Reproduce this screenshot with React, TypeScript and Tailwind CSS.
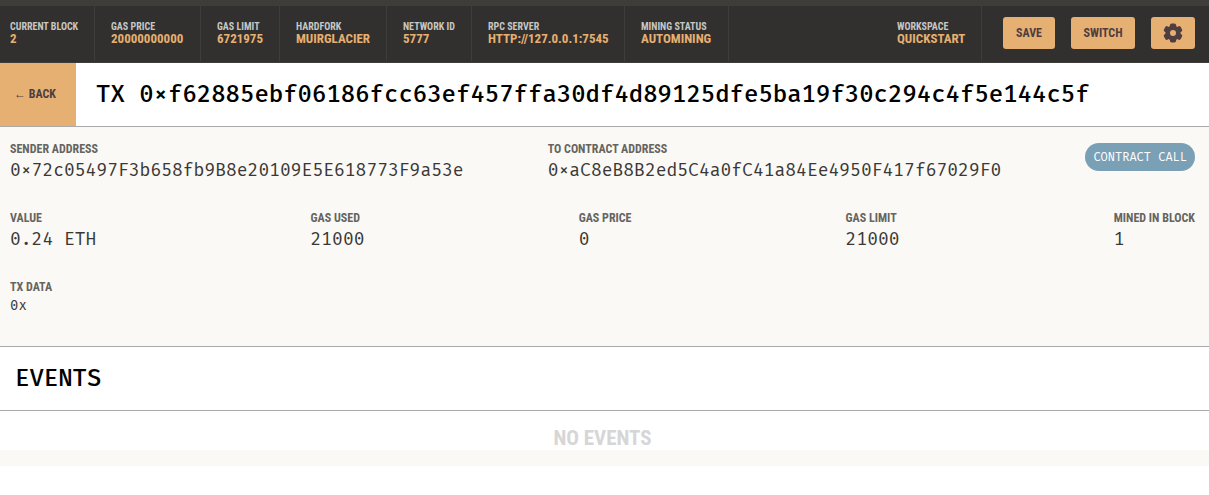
import type { ReactNode } from "react";

const condensed = "font-['Roboto_Condensed','Liberation_Sans_Narrow',Roboto,sans-serif]";
const mono = "font-['Fira_Mono','Noto_Sans_Mono','Liberation_Mono',monospace]";

const statuses = [
  { label: "Current Block", value: "2", box: "w-[95px] pl-2.5" },
  { label: "Gas Price", value: "20000000000", box: "w-[106px] pl-4" },
  { label: "Gas Limit", value: "6721975", box: "w-[79px] pl-4" },
  { label: "Hardfork", value: "MuirGlacier", box: "w-[107px] pl-4" },
  { label: "Network ID", value: "5777", box: "w-[85px] pl-4" },
  { label: "RPC Server", value: "http://127.0.0.1:7545", box: "w-[153px] pl-4" },
  { label: "Mining Status", value: "Automining", box: "w-[104px] pl-4" },
];

function Status({ label, value, box }: { label: string; value: string; box: string }) {
  return (
    <div
      className={`${box} shrink-0 border-r border-[#3f3d39] pt-[15px] font-bold whitespace-nowrap uppercase`}
    >
      <div className="text-[10px] leading-3 text-[#c8c7c4]">{label}</div>
      <div className="text-[13px] leading-3 text-[#e6b072]">{value}</div>
    </div>
  );
}

function Field({ label, children, small }: { label: string; children: ReactNode; small?: boolean }) {
  return (
    <div>
      <dt className="text-[12px] leading-4 font-bold whitespace-nowrap text-[#66645f] uppercase">{label}</dt>
      <dd className={`${mono} text-[#3a3834] ${small ? "text-[14px] leading-[22px]" : "text-[18px] leading-[26px]"}`}>
        {children}
      </dd>
    </div>
  );
}

const button =
  "flex h-8 items-center justify-center rounded-[3px] bg-[#e6b072] text-[12px] font-bold text-[#4e3d41] uppercase";

function Gear() {
  return (
    <svg viewBox="0 0 20 20" className="size-5" fill="currentColor" aria-hidden="true">
      <rect x="6.9" y="0.4" width="6.2" height="19.2" rx="1.8" />
      <rect x="6.9" y="0.4" width="6.2" height="19.2" rx="1.8" transform="rotate(60 10 10)" />
      <rect x="6.9" y="0.4" width="6.2" height="19.2" rx="1.8" transform="rotate(120 10 10)" />
      <circle cx="10" cy="10" r="7.6" />
      <circle cx="10" cy="10" r="3" className="fill-[#e6b072]" />
    </svg>
  );
}

export default function App() {
  return (
    <div className={`${condensed} bg-white`}>
      <header className="flex h-[63px] border-t-6 border-b border-[#3f3d39] bg-[#31302e] pr-3.5">
        <div className="flex pb-px">
          {statuses.map((s) => (
            <Status key={s.label} {...s} />
          ))}
        </div>
        <div className="ml-auto flex pb-px">
          <Status label="Workspace" value="Quickstart" box="w-[101px] pl-4" />
        </div>
        <div className="ml-[21px] flex gap-4 pt-[11px]">
          <button className={`${button} w-[52px]`}>Save</button>
          <button className={`${button} w-16`}>Switch</button>
          <button className={`${button} w-11`} aria-label="Settings">
            <Gear />
          </button>
        </div>
      </header>
      <main className="bg-[#faf9f5] pb-4">
        <div className="flex h-16 border-b border-[#aaa9a9] bg-white">
          <button className="w-[76px] bg-[#e6b072] pr-1.5 pb-0.5 text-[12px] font-bold text-[#4e3d41] uppercase">
            ← Back
          </button>
          <h1 className={`${mono} pl-5 text-[24px] leading-[62px] font-medium whitespace-nowrap text-black`}>
            TX 0×f62885ebf06186fcc63ef457ffa30df4d89125dfe5ba19f30c294c4f5e144c5f
          </h1>
        </div>
        <dl className="flex flex-col gap-[27px] pt-3.5 pr-3.5 pb-[29px] pl-2.5">
          <div className="flex justify-between">
            <Field label="Sender Address">0×72c05497F3b658fb9B8e20109E5E618773F9a53e</Field>
            <Field label="To Contract Address">0×aC8eB8B2ed5C4a0fC41a84Ee4950F417f67029F0</Field>
            <div className={`${mono} mt-0.5 h-7 rounded-full bg-[#7aa0b6] px-2 text-[12px] leading-7 text-white`}>
              CONTRACT CALL
            </div>
          </div>
          <div className="flex justify-between">
            <Field label="Value">0.24 ETH</Field>
            <Field label="Gas Used">21000</Field>
            <Field label="Gas Price">0</Field>
            <Field label="Gas Limit">21000</Field>
            <Field label="Mined in Block">1</Field>
          </div>
          <Field label="TX Data" small>
            0x
          </Field>
        </dl>
        <section className="bg-white">
          <h2
            className={`${mono} h-[65px] border-y border-[#aaa9a9] pl-[15px] text-[24px] leading-[62px] font-medium text-black`}
          >
            EVENTS
          </h2>
          <p className="pt-[15px] pr-1 text-center text-[21px] leading-6 font-bold text-[#d6d6d6]">NO EVENTS</p>
        </section>
      </main>
    </div>
  );
}
